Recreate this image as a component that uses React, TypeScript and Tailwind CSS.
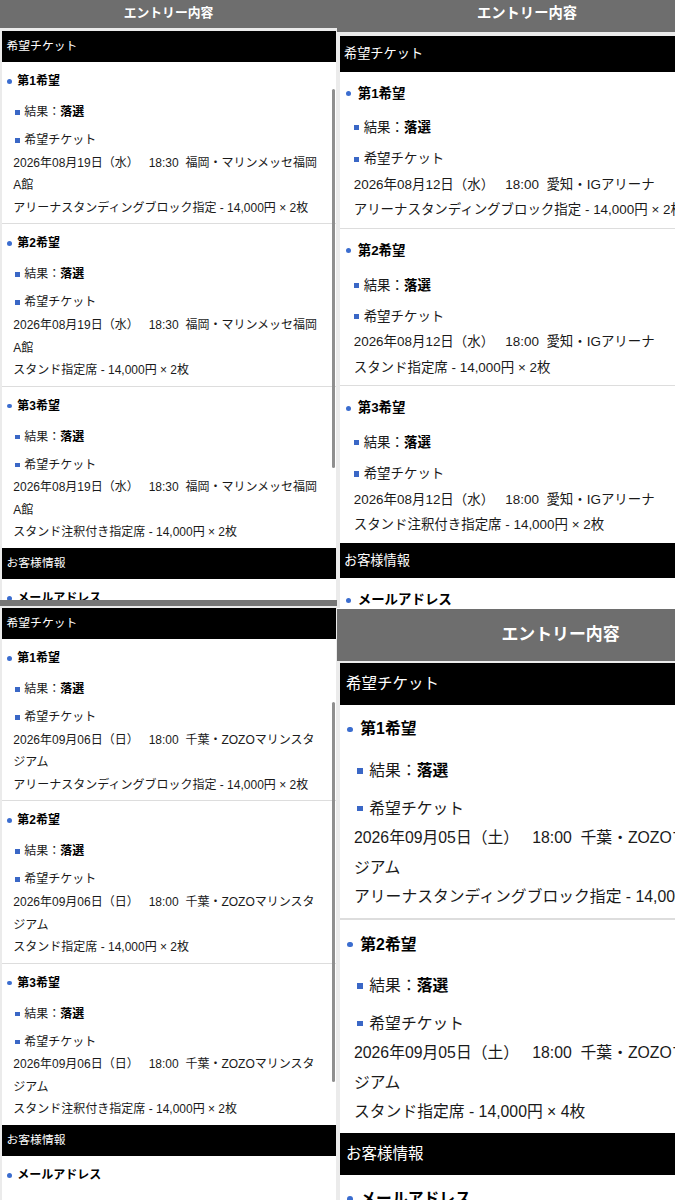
import React from 'react';

type Cfg = {
  outer: string;
  inner: string;
  header: string;
  headerText?: string;
  box: string;
  bar: string;
  text: string;
  first: string;
  sec: string;
  pb: string;
  titleRow: string;
  dot: string;
  titleText: string;
  subRow: string;
  square: string;
  subText: string;
  titleMb: string;
  resultMb: string;
  detail: string;
  scroll?: string;
};

type Sec = { n: number; lines: string[] };

const FONT = "font-['Liberation_Sans','Noto_Sans_CJK_JP',sans-serif]";

const BAR = 'flex items-center bg-black text-white';

const TL: Cfg = {
  outer: 'relative h-[600px] w-[337px] overflow-hidden bg-[#ebebeb]',
  inner: 'w-[337px]',
  header: 'h-[28px] bg-[#6e6e6e] text-center',
  headerText: 'text-[12.8px] leading-[20px] font-bold text-white',
  box: 'pt-[3px] px-[1.5px]',
  bar: 'h-[31px] pl-[5px] text-[11.8px]',
  text: 'text-[12px] leading-[22.6px]',
  first: 'pt-[8px]',
  sec: 'pt-[8px] border-t border-[#dddddd]',
  pb: 'pb-[4px]',
  titleRow: 'pl-[5.8px]',
  dot: 'w-[4.6px] h-[4.6px]',
  titleText: 'ml-[5.4px]',
  subRow: 'pl-[13.5px]',
  square: 'w-[4.8px] h-[4.8px]',
  subText: 'ml-[4.4px]',
  titleMb: 'mb-[8.4px]',
  resultMb: 'mb-[5.4px]',
  detail: 'pl-[11.8px]',
  scroll: 'top-[89px] h-[379px]',
};

const BL: Cfg = {
  ...TL,
  header: 'h-[6px] bg-[#767676]',
  headerText: undefined,
  box: 'pt-[2px] px-[1.5px]',
  scroll: 'top-[102px] h-[380px]',
};

const TR: Cfg = {
  outer: 'relative h-[608px] w-[338px] overflow-hidden bg-[#ebebeb]',
  inner: 'w-[380px]',
  header: 'h-[32px] bg-[#6e6e6e] text-center',
  headerText: 'text-[14.3px] leading-[27px] font-bold text-white',
  box: 'pt-[4px] pl-[3px]',
  bar: 'h-[35.5px] pl-[4px] text-[13.2px]',
  text: 'text-[13.45px] leading-[25.3px]',
  first: 'pt-[9px]',
  sec: 'pt-[9px] border-t-[1.5px] border-[#dddddd]',
  pb: 'pb-[5.6px]',
  titleRow: 'pl-[6.2px]',
  dot: 'w-[5px] h-[5px]',
  titleText: 'ml-[6.5px]',
  subRow: 'pl-[13.7px]',
  square: 'w-[5.2px] h-[5.2px]',
  subText: 'ml-[4.8px]',
  titleMb: 'mb-[9.4px]',
  resultMb: 'mb-[6px]',
  detail: 'pl-[13.7px]',
};

const BR: Cfg = {
  outer: 'relative h-[592px] w-[338px] overflow-hidden bg-[#ebebeb]',
  inner: 'w-[447px]',
  header: 'h-[53px] border-t border-white bg-[#6e6e6e] flex items-center justify-center',
  headerText: 'text-[16.9px] font-bold text-white',
  box: 'pt-[2.3px] pl-[3px]',
  bar: 'h-[41.7px] pl-[6px] text-[15.5px]',
  text: 'text-[15.8px] leading-[29.6px]',
  first: 'pt-[9.5px]',
  sec: 'pt-[9.5px] border-t-2 border-[#dddddd]',
  pb: 'pb-[6px]',
  titleRow: 'pl-[7px]',
  dot: 'w-[5.5px] h-[5.5px]',
  titleText: 'ml-[7.8px]',
  subRow: 'pl-[17px]',
  square: 'w-[5.8px] h-[5.8px]',
  subText: 'ml-[6.5px]',
  titleMb: 'mb-[12.1px]',
  resultMb: 'mb-[7.9px]',
  detail: 'pl-[14px]',
};

const SEAT1 = 'アリーナスタンディングブロック指定 - 14,000円 × 2枚';
const SEAT2 = 'スタンド指定席 - 14,000円 × 2枚';
const SEAT3 = 'スタンド注釈付き指定席 - 14,000円 × 2枚';

const fukuoka = '2026年08月19日（水）   18:30  福岡・マリンメッセ福岡';
const aichi = '2026年08月12日（水）   18:00  愛知・IGアリーナ';
const chiba6 = '2026年09月06日（日）   18:00  千葉・ZOZOマリンスタ';
const chiba5 = '2026年09月05日（土）   18:00  千葉・ZOZOマリンスタ';

const tlSecs: Sec[] = [
  { n: 1, lines: [fukuoka, 'A館', SEAT1] },
  { n: 2, lines: [fukuoka, 'A館', SEAT2] },
  { n: 3, lines: [fukuoka, 'A館', SEAT3] },
];
const trSecs: Sec[] = [
  { n: 1, lines: [aichi, SEAT1] },
  { n: 2, lines: [aichi, SEAT2] },
  { n: 3, lines: [aichi, SEAT3] },
];
const blSecs: Sec[] = [
  { n: 1, lines: [chiba6, 'ジアム', SEAT1] },
  { n: 2, lines: [chiba6, 'ジアム', SEAT2] },
  { n: 3, lines: [chiba6, 'ジアム', SEAT3] },
];
const brSecs: Sec[] = [
  { n: 1, lines: [chiba5, 'ジアム', SEAT1] },
  { n: 2, lines: [chiba5, 'ジアム', 'スタンド指定席 - 14,000円 × 4枚'] },
];

function TitleRow({ c, label }: { c: Cfg; label: string }) {
  return (
    <div className={`flex items-center ${c.titleRow}`}>
      <span className={`shrink-0 rounded-full bg-[#3b6dcf] ${c.dot}`} />
      <span className={`font-bold text-black ${c.titleText}`}>{label}</span>
    </div>
  );
}

function SubRow({ c, children, mb }: { c: Cfg; children: React.ReactNode; mb?: string }) {
  return (
    <div className={`flex items-center ${c.subRow} ${mb ?? ''}`}>
      <span className={`shrink-0 bg-[#3a67c6] ${c.square}`} />
      <span className={c.subText}>{children}</span>
    </div>
  );
}

function Panel({ c, secs }: { c: Cfg; secs: Sec[] }) {
  return (
    <div className={c.outer}>
      <div className={`${c.inner} ${FONT} text-[#1a1a1a]`}>
        <div className={c.header}>
          {c.headerText && <span className={c.headerText}>エントリー内容</span>}
        </div>
        <div className={c.box}>
          <div className={`bg-white ${c.text}`}>
            <div className={`${BAR} ${c.bar}`}>希望チケット</div>
            {secs.map((s, i) => (
              <div key={s.n} className={`${i === 0 ? c.first : c.sec} ${c.pb}`}>
                <div className={c.titleMb}>
                  <TitleRow c={c} label={`第${s.n}希望`} />
                </div>
                <SubRow c={c} mb={c.resultMb}>
                  結果：<b className="font-bold text-black">落選</b>
                </SubRow>
                <SubRow c={c}>希望チケット</SubRow>
                <div className={c.detail}>
                  {s.lines.map((l, j) => (
                    <div key={j} className="whitespace-pre">
                      {l}
                    </div>
                  ))}
                </div>
              </div>
            ))}
            <div className={`${BAR} ${c.bar}`}>お客様情報</div>
            <div className={`${c.first} h-[200px]`}>
              <TitleRow c={c} label="メールアドレス" />
            </div>
          </div>
        </div>
      </div>
      {c.scroll && (
        <div className={`absolute right-[2.5px] w-[2.5px] rounded-full bg-[#8f8f8f] ${c.scroll}`} />
      )}
    </div>
  );
}

export default function App() {
  return (
    <div className="flex h-[1200px] w-[675px] overflow-hidden bg-white">
      <div className="flex w-[337px] flex-col">
        <Panel c={TL} secs={tlSecs} />
        <Panel c={BL} secs={blSecs} />
      </div>
      <div className="flex w-[338px] flex-col">
        <Panel c={TR} secs={trSecs} />
        <Panel c={BR} secs={brSecs} />
      </div>
    </div>
  );
}
